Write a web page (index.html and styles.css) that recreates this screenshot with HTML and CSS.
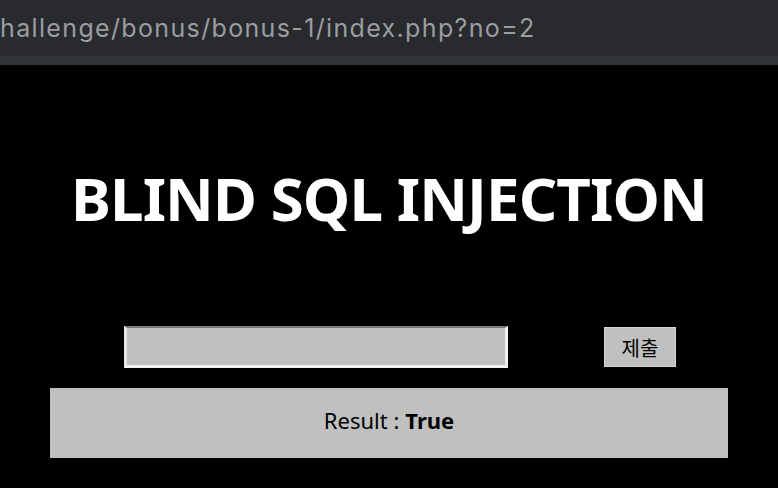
FILE: index.html
```html
<!DOCTYPE html>
<html lang="ko">
<head>
<meta charset="utf-8">
<link rel="stylesheet" href="styles.css">
</head>
<body>
<div class="urlbar"><span class="url">hallenge/bonus/bonus-1/index.php?no=2</span></div>
<div class="strip"></div>
<main class="page">
  <h1 class="title">BLIND SQL INJECTION</h1>
  <form class="form">
    <input class="field" type="text">
    <button class="submit" type="button">제출</button>
  </form>
  <div class="result">Result : <b>True</b></div>
</main>
</body>
</html>
```
FILE: styles.css
```css
html, body { margin: 0; padding: 0; background: #000; height: 100%; overflow: hidden; }
body { font-family: "Noto Sans", "Noto Sans CJK KR", sans-serif; }
.urlbar {
  height: 56px;
  background: #282a2e;
  display: flex;
  align-items: center;
  overflow: hidden;
  white-space: nowrap;
}
.url {
  font-family: "Inter", "Liberation Sans", sans-serif;
  font-size: 25px;
  letter-spacing: 1.35px;
  color: #9b9da1;
  margin-left: 0;
  margin-top: 0;
}
.strip { height: 9px; background: #313437; }
.page { display: flex; flex-direction: column; align-items: center; }
.title {
  margin: 98px 0 0;
  color: #fff;
  font-size: 60px;
  font-weight: 700;
  line-height: 70px;
  letter-spacing: -0.9px;
}
.form {
  width: 552px;
  margin-top: 93px;
  display: flex;
  justify-content: space-between;
  align-items: center;
  margin-left: 22px;
}
.field {
  box-sizing: border-box;
  width: 384px;
  height: 42px;
  background: #c0c0c0;
  border-style: solid;
  border-width: 2px 3px 3px 3px;
  border-color: #7a7a7a #f0f0f0 #f4f4f4 #e6e6e6;
  margin: 0;
  padding: 0;
}
.submit {
  box-sizing: border-box;
  width: 72px;
  height: 40px;
  background: #c0c0c0;
  border: 1px solid #d6d6d6;
  font-family: "Noto Sans CJK KR", sans-serif;
  font-size: 20px;
  color: #000;
  padding: 0;
}
.result {
  box-sizing: border-box;
  width: 678px;
  height: 70px;
  margin-top: 20px;
  background: #c0c0c0;
  display: flex;
  align-items: center;
  justify-content: center;
  font-size: 22px;
  color: #000;
  padding-bottom: 6px;
}
.result b { font-weight: 700; margin-left: 6px; }
```
